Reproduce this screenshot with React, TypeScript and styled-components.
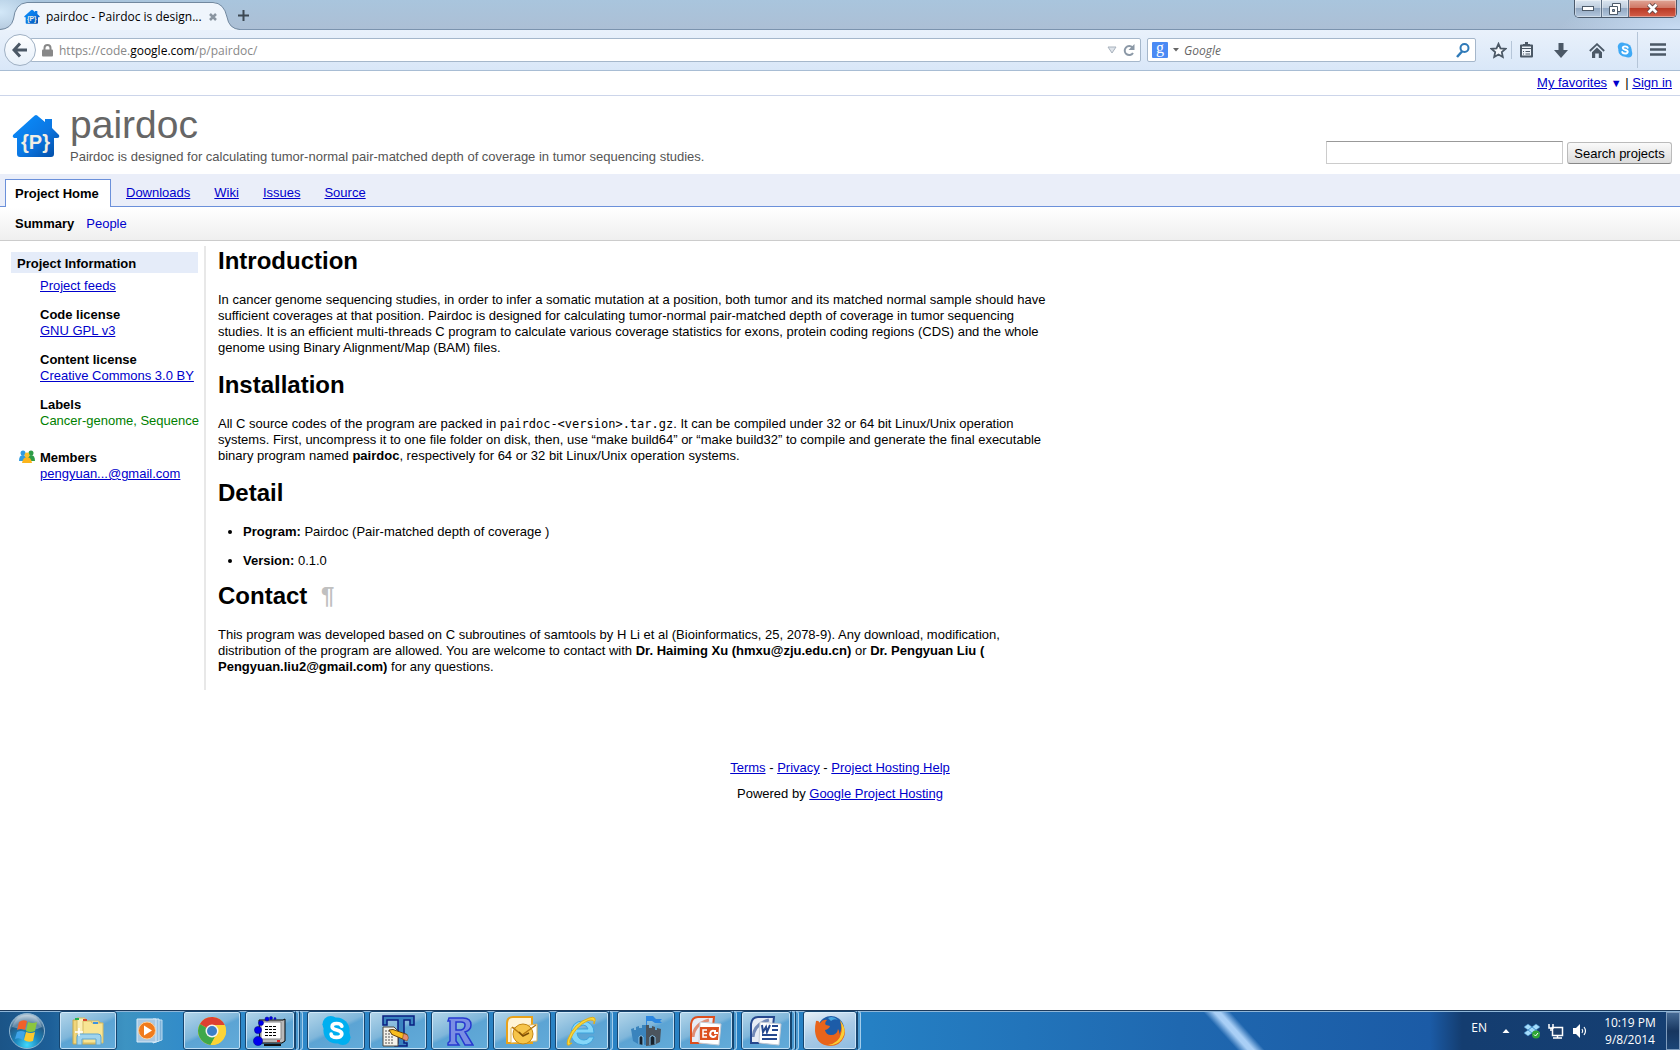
import React from 'react';
import styled, { createGlobalStyle, css } from 'styled-components';

const GlobalStyle = createGlobalStyle`
  * { box-sizing: border-box; }
  body { margin: 0; background: #fff; color: #000; font: 13px/16px Arial, "Liberation Sans", sans-serif; }
  a { color: #0000cc; }
  button, input { font: inherit; color: inherit; }
  svg { display: block; flex: none; }
`;

const ui = '"Segoe UI", "Open Sans", "Noto Sans", sans-serif';

const Screen = styled.div`
  min-height: 100vh;
  display: flex;
  flex-direction: column;
`;

/* ---------- browser window ---------- */

const TitleBar = styled.div`
  height: 30px;
  display: flex;
  align-items: flex-end;
  border-bottom: 1px solid #7b93ae;
  background:
    radial-gradient(ellipse 40px 24px at 0 12px, #d3e8f8, transparent),
    radial-gradient(ellipse 120px 30px at 100% 100%, #c8dcf4, transparent),
    linear-gradient(#a9c5dd, #acbfd5);
`;

const Tab = styled.div`
  position: relative;
  width: 240px;
  height: 29px;
  margin-bottom: -1px;
  padding: 2px 26px 0 24px;
  display: flex;
  align-items: center;
  gap: 6px;
  font: 12px/16px ${ui};
  white-space: nowrap;
`;

const TabShape = styled.svg`
  position: absolute;
  inset: 0;
`;

const TabTitle = styled.span`
  position: relative;
  flex: 1;
`;

const PlainButton = styled.button`
  position: relative;
  padding: 0;
  border: 0;
  background: none;
  display: flex;
  align-items: center;
  justify-content: center;
`;

const NewTab = styled(PlainButton)`
  width: 30px;
  height: 27px;
  margin-left: -12px;
`;

const WindowButtons = styled.div`
  display: flex;
  align-self: flex-start;
  height: 18px;
  margin: 0 3px 0 auto;
  border: 1px solid #4a596b;
  border-top: 0;
  border-radius: 0 0 5px 5px;
  overflow: hidden;
`;

const WindowButton = styled.button<{ $close?: boolean }>`
  width: ${p => (p.$close ? 47 : 27)}px;
  padding: 0;
  border: 0;
  border-right: ${p => (p.$close ? '0' : '1px solid #5d6f84')};
  display: flex;
  align-items: center;
  justify-content: center;
  background: ${p =>
    p.$close
      ? 'linear-gradient(#e0a596, #cf7462 48%, #b93a26 50%, #d5604a)'
      : 'linear-gradient(#dbe6f1, #bccbdc 48%, #93a9c3 50%, #b4c8de)'};
  box-shadow: inset 0 0 0 1px rgba(255, 255, 255, 0.4);
`;

const Toolbar = styled.div`
  height: 41px;
  padding: 0 2px 0 4px;
  display: flex;
  align-items: center;
  border-bottom: 1px solid #a8bdd4;
  background: linear-gradient(#e9f1fb, #d9e7f8);
  font: 12px/16px ${ui};
`;

const BackButton = styled(PlainButton)`
  z-index: 1;
  width: 32px;
  height: 32px;
  border: 1px solid #9fb0c3;
  border-radius: 50%;
  background: linear-gradient(#fdfeff, #e7f0fa);
`;

const field = css`
  height: 24px;
  border: 1px solid #a5b7cb;
  border-radius: 2px;
  background: #fff;
  display: flex;
  align-items: center;
`;

const AddressBar = styled.div`
  ${field}
  flex: 1;
  margin-left: -6px;
  padding: 0 5px 0 11px;
  gap: 6px;
  color: #888;
  b { font-weight: 400; color: #000; }
`;

const Address = styled.span`
  flex: 1;
  padding-top: 1px;
`;

const SearchBar = styled.form`
  ${field}
  width: 329px;
  margin: 0 9px 0 6px;
  padding: 0 5px 0 4px;
  gap: 5px;
`;

const EngineBadge = styled.span`
  width: 16px;
  height: 16px;
  border-radius: 1px;
  background: #4a8af4;
  color: #fff;
  font: 16px/12px "Liberation Serif", serif;
  text-align: center;
`;

const SearchInput = styled.input`
  flex: 1;
  min-width: 0;
  padding: 1px 0 0;
  border: 0;
  outline: 0;
  background: none;
  &::placeholder { color: #666; opacity: 1; font-style: italic; }
`;

const Tools = styled.div`
  display: flex;
  align-items: center;
`;

const Tool = styled(PlainButton)<{ $w: number }>`
  width: ${p => p.$w}px;
  height: 24px;
`;

const ToolRule = styled.span<{ $tall?: boolean }>`
  width: 1px;
  height: ${p => (p.$tall ? 36 : 18)}px;
  background: #b5c5d8;
`;

/* ---------- project page ---------- */

const Page = styled.div`
  flex: 1;
`;

const AccountBar = styled.div`
  height: 25px;
  padding: 4px 8px 0;
  border-bottom: 1px solid #ccd5ea;
  text-align: right;
`;

const Marker = styled.span`
  color: #0000cc;
  font-size: 11px;
`;

const Header = styled.header`
  height: 78px;
  padding: 8px 8px 0 12px;
  display: flex;
`;

const LogoBox = styled.a`
  width: 48px;
  padding-top: 9px;
`;

const Heading = styled.div`
  flex: 1;
  margin-left: 10px;
  color: #555;
`;

const ProjectName = styled.div`
  margin-bottom: 3px;
  font-size: 39px;
  line-height: 42px;
  color: #666;
`;

const SearchProjects = styled.form`
  display: flex;
  align-items: flex-end;
  align-self: flex-start;
  gap: 4px;
  padding-top: 37px;
`;

const ProjectInput = styled.input`
  width: 237px;
  height: 23px;
  border: 1px solid #ccc;
  border-top-color: #999;
`;

const ProjectButton = styled.button`
  width: 105px;
  height: 22px;
  padding: 1px 0 0;
  border: 1px solid #bbb;
  border-bottom-color: #888;
  border-radius: 3px;
  background: linear-gradient(#fafafa, #dcdcdc);
  white-space: nowrap;
`;

const Tabs = styled.nav`
  height: 33px;
  padding: 5px 5px 0;
  display: flex;
  align-items: flex-start;
  background: #eaeef9;
  border-bottom: 1px solid #6b90da;
`;

const CurrentTab = styled.span`
  min-width: 106px;
  height: 28px;
  padding: 6px 9px;
  margin-right: 3px;
  border: 1px solid #6b90da;
  border-bottom: 0;
  background: #fff;
  font-weight: 700;
`;

const TabLink = styled.a`
  padding: 6px 12px;
`;

const SubNav = styled.nav`
  height: 34px;
  padding: 9px 15px;
  display: flex;
  gap: 12px;
  border-bottom: 1px solid #ccc;
  background: linear-gradient(#fff, #efefef);
  a { text-decoration: none; }
`;

const Body = styled.div`
  display: flex;
  align-items: stretch;
  padding: 5px 0 0 11px;
`;

const Sidebar = styled.aside`
  width: 187px;
  padding-top: 6px;
`;

const SideTitle = styled.h4`
  margin: 0 0 5px;
  padding: 4px 6px 1px;
  background: #e5ecf9;
  font-size: 13px;
`;

const SideGroup = styled.div`
  margin: 0 0 13px 29px;
  display: flex;
  flex-direction: column;
  align-items: flex-start;
  white-space: nowrap;
`;

const LabelText = styled.span`
  color: #008000;
`;

const MembersRow = styled.div`
  display: flex;
  gap: 5px;
  margin: 21px 0 0 8px;
`;

const Article = styled.main`
  margin-left: 6px;
  padding-left: 12px;
  border-left: 2px solid #e8e8e8;
`;

const Title = styled.h1`
  margin: 0 0 17px;
  font-size: 24px;
  line-height: 28px;
  &:first-child { margin-top: 1px; }
  span { color: #c0c0c0; margin-left: 7px; }
`;

const Paragraph = styled.p`
  max-width: 836px;
  margin: 0 0 15px;
`;

const Code = styled.code`
  font: 12px/16px "DejaVu Sans Mono", "Liberation Mono", monospace;
`;

const List = styled.ul`
  margin: 0 0 13px;
  padding-left: 25px;
  li + li { margin-top: 13px; }
`;

const Footer = styled.footer`
  padding-top: 70px;
  text-align: center;
  p { margin: 0 0 10px; }
`;

/* ---------- taskbar ---------- */

const Taskbar = styled.div`
  position: relative;
  height: 40px;
  display: flex;
  border-top: 1px solid #1c3a5c;
  box-shadow: inset 0 1px 0 #8fb6d8;
  background: linear-gradient(90deg, #1b5487 0, #1d5f98 50px, #3d93c2 125px, #2f8acb 200px, #2b83c4 500px, #2580c4 870px, #1f68b0 1180px, #1b5ba6 1430px, #143d70 1462px, #153f73);
`;

const Streak = styled.span`
  position: absolute;
  left: 1202px;
  top: 1px;
  width: 64px;
  height: 38px;
  background: linear-gradient(48deg, transparent 36%, #a9cff6 47%, #a9cff6 53%, transparent 64%);
`;

const Start = styled(PlainButton)`
  width: 59px;
  padding-right: 6px;
`;

const TaskButton = styled.button<{ $w: number; $kind?: 'plain' | 'active'; $gap: number }>`
  width: ${p => p.$w}px;
  height: 39px;
  margin-right: ${p => p.$gap}px;
  padding: 0;
  border: 1px solid transparent;
  border-radius: 3px;
  background: none;
  display: flex;
  align-items: center;
  justify-content: center;
  ${p =>
    p.$kind !== 'plain' &&
    css`
      border-color: #16456f;
      box-shadow: inset 0 0 0 1px rgba(222, 240, 255, 0.75);
      background: ${p.$kind === 'active'
        ? 'linear-gradient(160deg, #e8f1f8, #a9cae6 50%, #8dbbe0)'
        : 'linear-gradient(155deg, #b4d6ea 0, #7fb6da 45%, #5ca4d4 52%, #62abd9)'};
    `}
`;

const Stack = styled.span`
  width: 4px;
  height: 39px;
  border: 1px solid rgba(210, 234, 252, 0.65);
  border-left: 1px solid #16456f;
  border-radius: 0 3px 3px 0;
  background: #4b99cf;
`;

const Stacks = styled.span`
  display: flex;
  margin-right: 4px;
`;

const Tray = styled.div`
  margin-left: auto;
  display: flex;
  align-items: center;
  color: #fff;
  font: 12px/16px ${ui};
`;

const Language = styled.span`
  margin: 0 9px 6px 0;
`;

const TrayIcons = styled.div`
  display: flex;
  align-items: center;
  gap: 8px;
`;

const Clock = styled.div`
  width: 64px;
  margin: 0 4px 0 10px;
  padding-top: 1px;
  text-align: center;
  line-height: 17px;
`;

const ShowDesktop = styled(PlainButton)`
  width: 14px;
  height: 38px;
  border: 1px solid #7f9cbd;
  background: linear-gradient(#456a95, #17365f 50%, #1c4576);
`;

/* ---------- drawings ---------- */

const House = ({ size }: { size: number }) => (
  <svg width={size} height={size} viewBox="0 0 48 48">
    <defs>
      <linearGradient id="house" x1="0" y1="0" x2="1" y2="1">
        <stop offset="0" stopColor="#0a90ff" />
        <stop offset=".55" stopColor="#0b77e3" />
        <stop offset="1" stopColor="#0149a0" />
      </linearGradient>
    </defs>
    <path fill="url(#house)" d="M24 2Q25 2 27 4L33 9V6H40V15L47 22Q48 25 45 25H42V41Q42 44 39 44H8Q5 44 5 41V25H2Q0 24 1 22L21 4Q23 2 24 2Z" />
    <text x="23.5" y="36" textAnchor="middle" fontFamily="Liberation Sans, sans-serif" fontWeight="700" fontSize="20" fill="#f1eee4">{'{P}'}</text>
  </svg>
);

const SkypeMark = ({ size, color = '#00aff0' }: { size: number; color?: string }) => (
  <svg width={size} height={size} viewBox="0 0 32 32">
    <circle cx="16" cy="16" r="13.5" fill={color} />
    <circle cx="10" cy="9.5" r="8.5" fill={color} />
    <circle cx="22.5" cy="23" r="8" fill={color} />
    <path d="M21.500 11.500C20.500 8 11.500 7.500 11.500 12C11.500 16.500 21.500 14.500 21.500 19.500C21.500 24.500 11 24 10.500 19.800" fill="none" stroke="#fff" strokeWidth="3.8" strokeLinecap="round" />
  </svg>
);

const Folder = () => (
  <svg width="34" height="30" viewBox="0 0 34 30">
    <path d="M2 4h9l1 2h17v22H2z" fill="#f0d67c" stroke="#c9a849" />
    <path d="M6 2h8v3h14v22H6z" fill="#fbefb5" stroke="#d6bb62" />
    <path d="M12 5h8l1 2h11v20H12z" fill="#f8e594" stroke="#d6bb62" />
    <path d="M4 2h4v2H4z" fill="#23b14d" /><path d="M12 3h4v2h-4z" fill="#d9452b" /><path d="M22 6h5v2h-5z" fill="#3e92df" />
    <path d="M6 29V21q0-3 3-3h18q3 0 3 3v8h-5v-6H11v6z" fill="#9fd4ee" stroke="#5ea5cf" />
    <path d="M8 12v8M4 16h8" stroke="#fff" strokeWidth="1.5" />
  </svg>
);

const MediaPlayer = () => (
  <svg width="28" height="26" viewBox="0 0 28 26">
    <path d="M20 2h6v20l-6 2z" fill="#7fb2d8" stroke="#bcdcf2" />
    <path d="M17 1h6v22l-6 2z" fill="#94c0e2" stroke="#d3e9f8" />
    <path d="M1 1h19v23H1z" fill="#a9c8e2" stroke="#d9ebf8" />
    <circle cx="11" cy="12.5" r="8.5" fill="#f07b1d" stroke="#ffd09b" />
    <path d="M8 7.500l8 5-8 5z" fill="#fff" />
  </svg>
);

const Chrome = () => (
  <svg width="30" height="30" viewBox="0 0 30 30">
    <circle cx="15" cy="15" r="14" fill="#fbd437" />
    <path d="M15 15L2.900 8A14 14 0 0 1 27.700 9H15z" fill="#dd4031" />
    <path d="M15 15L2.900 8A14 14 0 0 0 13.500 28.900L20 17z" fill="#3fa84a" />
    <path d="M15 9H27.700A14 14 0 0 1 13.500 28.900L20.500 17z" fill="#fbd437" />
    <circle cx="15" cy="15" r="6.5" fill="#f4f4f4" />
    <circle cx="15" cy="15" r="5" fill="#3b7fc6" />
  </svg>
);

const Terminal = () => (
  <svg width="34" height="30" viewBox="0 0 34 30">
    <path d="M6 4h24l2-1v22l-3 2H7z" fill="#b9b9b9" stroke="#000" />
    <path d="M8 6h20v17H8z" fill="#fff" stroke="#888" />
    <path d="M12 10.500h12M12 13.500h12M12 16.500h12M12 19.500h12" stroke="#000" strokeDasharray="3 1" />
    <path d="M11 29h17" stroke="#111" strokeWidth="2" />
    <path d="M24 25h3" stroke="#e02020" strokeWidth="2" />
    <g fill="#0000ee" stroke="#00008a" strokeWidth=".5">
      <circle cx="5" cy="25" r="4.6" /><circle cx="5" cy="14" r="3.6" /><circle cx="8" cy="7" r="2.5" /><circle cx="14" cy="3" r="2" /><circle cx="18" cy="2" r="1.5" /><circle cx="22" cy="2.5" r="1" />
    </g>
  </svg>
);

const TextPad = () => (
  <svg width="34" height="34" viewBox="0 0 34 34">
    <path d="M2 2H33V11H29V6H23V29H26V32H14V29H17V6H6V11H2Z" fill="#3a83c0" stroke="#0a1f80" strokeWidth="1.5" />
    <path d="M2 13h11l4 4v15H2z" fill="#f4f2ea" stroke="#4d4840" />
    <path d="M4 17h8M4 20h9M4 23h8M4 26h8M4 29h8" stroke="#555" strokeDasharray="2 1" />
    <path d="M8 16L12 15.500L26 20.500L24 26L11 20.500z" fill="#f8bd1c" stroke="#64400c" />
    <path d="M22.500 19.500L26.500 21Q28.500 24 26 27L21.500 25z" fill="#e58d73" stroke="#64400c" strokeWidth=".5" />
  </svg>
);

const RMark = () => (
  <svg width="28" height="30" viewBox="0 0 28 30">
    <path d="M3 2H17Q25 2 25 9Q25 14 19 16L27 29H19L13 18H10V25L13 29H2V27L4 25V5H2zM10 6V14H15Q19 13 19 9Q19 6 15 6z" fill="#7a8ee4" stroke="#2638cf" strokeWidth="1.5" fillRule="evenodd" />
  </svg>
);

const Outlook = () => (
  <svg width="32" height="30" viewBox="0 0 32 30">
    <path d="M1 27V7Q1 1 7 1H26V27z" fill="#fff4d5" stroke="#e9a21b" strokeWidth="2" />
    <path d="M5 12L31 8V25L5 27z" fill="#fff" stroke="#ddb65b" />
    <circle cx="17" cy="18" r="10" fill="#f6c54a" stroke="#c48713" />
    <path d="M6 11l10 8L30 9" fill="none" stroke="#b87910" strokeWidth="1.5" />
    <path d="M13 16l4 4 6-3" fill="none" stroke="#7d4e05" strokeWidth="1.5" />
  </svg>
);

const Explorer = () => (
  <svg width="32" height="32" viewBox="0 0 32 32">
    <path d="M28 18H11Q12 25 18 25Q22 25 23 22H28Q25 30 17 30Q5 29 5 18Q6 6 17 6Q28 7 28 18zM22 14Q21 10 17 10Q12 11 11 14z" fill="#84d6f8" stroke="#3fa4dd" fillRule="evenodd" />
    <path d="M6 28Q-1 34 2 24Q8 8 23 3Q32 0 28 9Q29 3 21 6Q9 12 4 25Q3 30 6 28z" fill="#f9d83c" stroke="#e0ae1a" />
  </svg>
);

const Castle = () => (
  <svg width="32" height="32" viewBox="0 0 32 32">
    <path d="M16 11V1h7l3 3h6l-2 2 2 2h-7l-3-2h-5v5z" fill="#2b86e0" />
    <path d="M1 14l3-1v2h2v-3l3-1v2h3v-3h4v20l-8-1-5-3z" fill="#3a84bd" />
    <path d="M16 10h3v3h3v-2l3 1v3h2v-2l4 1-1 13-6 3-8 1z" fill="#4b545d" />
    <path d="M9 29v-7q2-3 4 0v8M20 30v-8q2-3 5 0v7" fill="#17222d" stroke="#8bc7ef" />
  </svg>
);

const OfficeDoc = ({ color, word }: { color: string; word?: boolean }) => (
  <svg width="32" height="30" viewBox="0 0 32 30">
    <path d="M1 27V8Q2 1 8 1H24L21 27z" fill="#e7ecf5" stroke={color} strokeWidth="2" />
    <path d="M3 21Q4 8 19 4" stroke={color} strokeWidth="3" fill="none" opacity=".6" />
    <path d="M10 6L31 8L29 29L9 27z" fill="#fff" stroke="#c3cbd6" />
    {word ? (
      <g stroke={color} fill="none" strokeWidth="2">
        <path d="M12 9l1 7 3-5 1 5 3-7M22 10h6M22 14h6M12 19h15M12 23h15" />
      </g>
    ) : (
      <g fill={color}>
        <path d="M10 11h19l-1 13H10z" />
        <path d="M17 14h-4v7h4M13 17.500h4" stroke="#fff" strokeWidth="1.5" fill="none" />
        <path d="M24 15A3 3 0 1 0 26 19M25 14v3h3" stroke="#fff" strokeWidth="2" />
      </g>
    )}
  </svg>
);

const Firefox = () => (
  <svg width="32" height="32" viewBox="0 0 32 32">
    <circle cx="17" cy="14" r="13" fill="#1d5ca8" />
    <path d="M14 3Q19 0 24 5Q20 3 17 6z" fill="#48a5dd" />
    <path d="M2 6Q4 5 6 8Q9 4 13 5Q10 8 12 10L16 11Q15 14 11 15Q12 20 17 20Q23 20 24 14Q26 17 25 20Q29 14 26 6Q33 14 30 22Q26 31 16 31Q2 30 1 16Q1 10 2 6z" fill="#e8641b" />
    <path d="M26 5Q34 16 28 24Q23 31 14 30Q25 28 27 19Q29 12 26 5z" fill="#f9cf35" />
  </svg>
);

const Orb = () => (
  <svg width="38" height="38" viewBox="0 0 38 38">
    <defs>
      <radialGradient id="orb" cx=".5" cy=".9" r=".85">
        <stop offset="0" stopColor="#40d8fb" /><stop offset=".4" stopColor="#1c86bd" /><stop offset=".75" stopColor="#225a86" /><stop offset="1" stopColor="#a9bfd0" />
      </radialGradient>
    </defs>
    <circle cx="19" cy="19" r="17.5" fill="url(#orb)" stroke="#8fb5d0" />
    <path d="M4 15Q8 3 19 3T34 15Q27 19 19 18T4 15z" fill="#fff" opacity=".28" />
    <path d="M11 10q4-3 8-1l-2 9q-4-2-8 0z" fill="#f0602a" />
    <path d="M20 10q5 2 9 0l-2 9q-5 2-9 0z" fill="#8cc63e" />
    <path d="M9 20q4-2 8 0l-2 8q-4-3-8-1z" fill="#3fa4e8" />
    <path d="M18 20q5 2 9 0l-2 9q-5 2-9-1z" fill="#fcc92e" />
  </svg>
);

const MembersIcon = () => (
  <svg width="16" height="13" viewBox="0 0 16 13">
    <circle cx="4" cy="3" r="2.5" fill="#2f9be0" /><path d="M0 11Q0 5 4 5T8 11z" fill="#2f9be0" />
    <circle cx="12" cy="3" r="2.5" fill="#2e9c46" /><path d="M8 11Q8 5 12 5T16 11z" fill="#2e9c46" />
    <circle cx="8" cy="5" r="2.5" fill="#fbc02a" /><path d="M3 13Q4 7 8 7T13 13z" fill="#fbb51c" />
  </svg>
);

const ink = '#4b5866';

const tasks: { name: string; w: number; icon: React.ReactNode; stacks?: number; kind?: 'plain' | 'active' }[] = [
  { name: 'Windows Explorer', w: 58, icon: <Folder /> },
  { name: 'Media Player', w: 58, icon: <MediaPlayer />, kind: 'plain' },
  { name: 'Chrome', w: 58, icon: <Chrome /> },
  { name: 'Terminal', w: 50, icon: <Terminal />, stacks: 2 },
  { name: 'Skype', w: 58, icon: <SkypeMark size={31} /> },
  { name: 'Text editor', w: 58, icon: <TextPad /> },
  { name: 'R', w: 58, icon: <RMark /> },
  { name: 'Outlook', w: 58, icon: <Outlook /> },
  { name: 'Internet Explorer', w: 54, icon: <Explorer />, stacks: 1 },
  { name: 'Server', w: 58, icon: <Castle /> },
  { name: 'PowerPoint', w: 54, icon: <OfficeDoc color="#dc4f1e" />, stacks: 1 },
  { name: 'Word', w: 50, icon: <OfficeDoc color="#25488e" word />, stacks: 2 },
  { name: 'Firefox', w: 54, icon: <Firefox />, stacks: 1, kind: 'active' },
];

function Browser() {
  return (
    <>
      <TitleBar>
        <Tab>
          <TabShape width="240" height="29" viewBox="0 0 240 29">
            <path d="M0 28.500Q11 28 13.500 18Q15 2.500 27 1.500H213Q224 2 227 16Q229 28 240 28.500V29H0z" fill="#eff5fc" />
            <path d="M0 28.500Q11 28 13.500 18Q15 2.500 27 1.500H213Q224 2 227 16Q229 28 240 28.500" fill="none" stroke="#71889f" />
          </TabShape>
          <PlainButton as="span"><House size={16} /></PlainButton>
          <TabTitle>pairdoc - Pairdoc is design...</TabTitle>
          <PlainButton aria-label="Close tab">
            <svg width="10" height="10" viewBox="0 0 10 10"><path d="M2 2l6 6M8 2l-6 6" stroke="#8a95a1" strokeWidth="2.5" /></svg>
          </PlainButton>
        </Tab>
        <NewTab aria-label="New tab">
          <svg width="11" height="11" viewBox="0 0 11 11"><path d="M5.500 0v11M0 5.500h11" stroke="#3d4853" strokeWidth="2" /></svg>
        </NewTab>
        <WindowButtons>
          <WindowButton aria-label="Minimize"><svg width="12" height="6" viewBox="0 0 12 6"><rect x=".5" y=".5" width="11" height="4" fill="#fff" stroke="#4d5a69" /></svg></WindowButton>
          <WindowButton aria-label="Restore"><svg width="12" height="12" viewBox="0 0 12 12"><path d="M3.500 .5h8v8h-8z" fill="#fff" stroke="#4d5a69" /><path d="M.5 3.500h8v8h-8z" fill="#fff" stroke="#4d5a69" /><path d="M3.500 6.500h2v2h-2z" fill="#8fa5bd" stroke="#4d5a69" /></svg></WindowButton>
          <WindowButton aria-label="Close" $close><svg width="13" height="11" viewBox="0 0 13 11"><path d="M2.500 1.500l8 8M10.500 1.500l-8 8" stroke="#5f4444" strokeWidth="4.5" /><path d="M2.500 1.500l8 8M10.500 1.500l-8 8" stroke="#fff" strokeWidth="2.8" /></svg></WindowButton>
        </WindowButtons>
      </TitleBar>
      <Toolbar>
        <BackButton aria-label="Back">
          <svg width="16" height="16" viewBox="0 0 16 16"><path d="M8 1.500L2 8l6 6.500M2.500 8H15" fill="none" stroke={ink} strokeWidth="3" /></svg>
        </BackButton>
        <AddressBar>
          <svg width="11" height="13" viewBox="0 0 11 13"><path d="M2.500 6V4a3 3 0 0 1 6 0v2" fill="none" stroke="#888" strokeWidth="2" /><rect y="5.5" width="11" height="7" rx="1" fill="#888" /></svg>
          <Address>https://code.<b>google.com</b>/p/pairdoc/</Address>
          <svg width="10" height="8" viewBox="0 0 10 8"><path d="M1 1h8L5 7z" fill="#dfe4ea" stroke="#a8b2bd" /></svg>
          <PlainButton aria-label="Reload">
            <svg width="12" height="13" viewBox="0 0 12 13"><path d="M9.500 3.500A4.500 4.500 0 1 0 10 9" fill="none" stroke="#8b98a6" strokeWidth="2" /><path d="M11.500 0v6h-6z" fill="#8b98a6" /></svg>
          </PlainButton>
        </AddressBar>
        <SearchBar>
          <EngineBadge>g</EngineBadge>
          <svg width="6" height="4" viewBox="0 0 6 4"><path d="M0 0h6L3 3.500z" fill="#666" /></svg>
          <SearchInput aria-label="Web search" placeholder="Google" />
          <svg width="14" height="15" viewBox="0 0 14 15"><circle cx="8.5" cy="5" r="4" fill="none" stroke="#2f7ab8" strokeWidth="2" /><path d="M6 8.500L1 14" stroke="#2f7ab8" strokeWidth="2.5" /></svg>
        </SearchBar>
        <Tools>
          <Tool $w={26} aria-label="Bookmark"><svg width="17" height="17" viewBox="0 0 17 17"><path d="M8.500 1.800L10.500 6.300L15.500 6.800L11.800 10.100L12.800 15L8.500 12.500L4.200 15L5.200 10.100L1.500 6.800L6.500 6.300z" fill="#f4f8fd" stroke={ink} strokeWidth="1.8" /></svg></Tool>
          <ToolRule />
          <Tool $w={28} aria-label="Bookmarks list"><svg width="15" height="16" viewBox="0 0 15 16"><path d="M2 3.500h11v11H2z" fill="#eef4fb" stroke={ink} strokeWidth="2" strokeLinejoin="round" /><path d="M4 4V2h2V0h3v2h2v2z" fill={ink} /><path d="M3 6.500h9M4 9.500h1M6.500 9.500h4.500M4 12h1M6.500 12h4.500" stroke={ink} strokeWidth="1.2" /></svg></Tool>
          <Tool $w={42} aria-label="Downloads"><svg width="14" height="15" viewBox="0 0 14 15"><path d="M4.500 0h5v7H14l-7 8-7-8h4.500z" fill={ink} /></svg></Tool>
          <Tool $w={30} aria-label="Home"><svg width="16" height="15" viewBox="0 0 16 15"><path d="M.8 8L8 1.200L15.200 8" fill="none" stroke={ink} strokeWidth="1.8" /><path d="M3 9.200l5-4.700 5 4.700V15H9.800v-4.500H6.200V15H3z" fill={ink} /></svg></Tool>
          <Tool $w={25} aria-label="Skype"><SkypeMark size={16} color="#3fa9f5" /></Tool>
          <ToolRule $tall />
          <Tool $w={40} aria-label="Menu"><svg width="16" height="14" viewBox="0 0 16 14"><path d="M0 1.500h16M0 6.500h16M0 11.500h16" stroke={ink} strokeWidth="2.6" /></svg></Tool>
        </Tools>
      </Toolbar>
    </>
  );
}

function ProjectPage() {
  return (
    <Page>
      <AccountBar>
        <a href="#favorites">My favorites</a> <Marker>▼</Marker> | <a href="#signin">Sign in</a>
      </AccountBar>
      <Header>
        <LogoBox href="#home" aria-label="pairdoc home"><House size={48} /></LogoBox>
        <Heading>
          <ProjectName>pairdoc</ProjectName>
          Pairdoc is designed for calculating tumor-normal pair-matched depth of coverage in tumor sequencing studies.
        </Heading>
        <SearchProjects>
          <ProjectInput aria-label="Search projects" />
          <ProjectButton type="button">Search projects</ProjectButton>
        </SearchProjects>
      </Header>
      <Tabs>
        <CurrentTab>Project Home</CurrentTab>
        <TabLink href="#downloads">Downloads</TabLink>
        <TabLink href="#wiki">Wiki</TabLink>
        <TabLink href="#issues">Issues</TabLink>
        <TabLink href="#source">Source</TabLink>
      </Tabs>
      <SubNav>
        <b>Summary</b>
        <a href="#people">People</a>
      </SubNav>
      <Body>
        <Sidebar>
          <SideTitle>Project Information</SideTitle>
          <SideGroup><a href="#feeds">Project feeds</a></SideGroup>
          <SideGroup><b>Code license</b><a href="#gpl">GNU GPL v3</a></SideGroup>
          <SideGroup><b>Content license</b><a href="#cc">Creative Commons 3.0 BY</a></SideGroup>
          <SideGroup><b>Labels</b><LabelText>Cancer-genome, Sequence</LabelText></SideGroup>
          <MembersRow><MembersIcon /><b>Members</b></MembersRow>
          <SideGroup><a href="#member">pengyuan...@gmail.com</a></SideGroup>
        </Sidebar>
        <Article>
          <Title>Introduction</Title>
          <Paragraph>
            In cancer genome sequencing studies, in order to infer a somatic mutation at a position, both tumor and its matched normal sample should have sufficient coverages at that position. Pairdoc is designed for calculating tumor-normal pair-matched depth of coverage in tumor sequencing studies. It is an efficient multi-threads C program to calculate various coverage statistics for exons, protein coding regions (CDS) and the whole genome using Binary Alignment/Map (BAM) files.
          </Paragraph>
          <Title>Installation</Title>
          <Paragraph>
            All C source codes of the program are packed in <Code>pairdoc-&lt;version&gt;.tar.gz</Code>. It can be compiled under 32 or 64 bit Linux/Unix operation systems. First, uncompress it to one file folder on disk, then, use “make build64” or “make build32” to compile and generate the final executable binary program named <b>pairdoc</b>, respectively for 64 or 32 bit Linux/Unix operation systems.
          </Paragraph>
          <Title>Detail</Title>
          <List>
            <li><b>Program:</b> Pairdoc (Pair-matched depth of coverage )</li>
            <li><b>Version:</b> 0.1.0</li>
          </List>
          <Title>Contact <span>¶</span></Title>
          <Paragraph>
            This program was developed based on C subroutines of samtools by H Li et al (Bioinformatics, 25, 2078-9). Any download, modification, distribution of the program are allowed. You are welcome to contact with <b>Dr. Haiming Xu (hmxu@zju.edu.cn)</b> or <b>Dr. Pengyuan Liu ( Pengyuan.liu2@gmail.com)</b> for any questions.
          </Paragraph>
        </Article>
      </Body>
      <Footer>
        <p><a href="#terms">Terms</a> - <a href="#privacy">Privacy</a> - <a href="#help">Project Hosting Help</a></p>
        <p>Powered by <a href="#hosting">Google Project Hosting</a></p>
      </Footer>
    </Page>
  );
}

function WindowsTaskbar() {
  return (
    <Taskbar>
      <Streak />
      <Start aria-label="Start"><Orb /></Start>
      {tasks.map(t => (
        <React.Fragment key={t.name}>
          <TaskButton $w={t.w} $kind={t.kind} $gap={t.stacks ? 0 : 4} aria-label={t.name}>{t.icon}</TaskButton>
          {t.stacks && <Stacks>{Array.from({ length: t.stacks }, (_, i) => <Stack key={i} />)}</Stacks>}
        </React.Fragment>
      ))}
      <Tray>
        <Language>EN</Language>
        <TrayIcons>
          <svg width="20" height="6" viewBox="0 0 20 6"><path d="M6.500 5L10 1l3.500 4z" fill="#fff" /></svg>
          <svg width="16" height="16" viewBox="0 0 16 16"><path d="M4 1l4 3-4 3-4-3zM12 1l4 3-4 3-4-3zM4 7l4 3-4 3-4-3zM12 7l4 3-4 3-4-3zM8 4l4 3-4 3-4-3z" fill="#a5dcfa" stroke="#3587c8" strokeWidth=".5" /><circle cx="12" cy="11.5" r="4" fill="#2fa536" /><path d="M10 11.500l1.500 1.500 2.500-3" stroke="#fff" fill="none" /></svg>
          <svg width="16" height="16" viewBox="0 0 16 16"><path d="M4.500 4.500h10v8h-10z" fill="#1c3d68" stroke="#fff" strokeWidth="1.5" /><path d="M5 15h9M9.500 13v2" stroke="#fff" strokeWidth="1.5" /><path d="M1 1v4h4V1M3 5v3" fill="none" stroke="#fff" strokeWidth="1.5" /></svg>
          <svg width="16" height="16" viewBox="0 0 16 16"><path d="M1 5h3l4-4v14l-4-4H1z" fill="#fff" /><path d="M10 6q1.500 2 0 4M12 4q3 4 0 8" fill="none" stroke="#fff" strokeWidth="1.2" /></svg>
        </TrayIcons>
        <Clock>10:19 PM<br />9/8/2014</Clock>
        <ShowDesktop aria-label="Show desktop" />
      </Tray>
    </Taskbar>
  );
}

export default function App() {
  return (
    <Screen>
      <GlobalStyle />
      <Browser />
      <ProjectPage />
      <WindowsTaskbar />
    </Screen>
  );
}
